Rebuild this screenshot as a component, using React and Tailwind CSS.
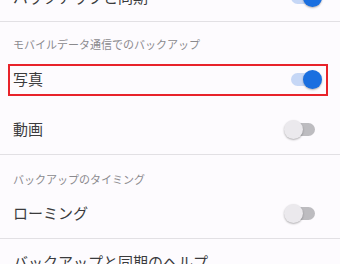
const font = { fontFamily: '"Noto Sans CJK JP", "Noto Sans", sans-serif' };

function Toggle({ on }) {
    return (
        <div className="relative w-[38px] h-[19px] shrink-0">
            <div className={`absolute left-[7px] top-[3px] w-[24px] h-[13px] rounded-full ${on ? 'bg-[#c6d7f6]' : 'bg-[#bdbcc0]'}`}></div>
            <div
                className={`absolute top-0 w-[19px] h-[19px] rounded-full shadow-[0_1px_2px_rgba(0,0,0,0.3)] ${on ? 'left-[19px] bg-[#1a6fe0]' : 'left-0 bg-[#ebe9ed]'}`}
            ></div>
        </div>
    );
}

function Row({ label, on, height, children }) {
    return (
        <div className={`relative flex items-center justify-between pl-[13px] pr-[18px] ${height}`}>
            <span className="text-[15px] text-[#3b3b3d]">{label}</span>
            {on !== undefined && <Toggle on={on} />}
            {children}
        </div>
    );
}

export default function App() {
    return (
        <div className="w-[340px] h-[264px] overflow-hidden bg-[#fdfbfe]" style={font}>
            <div className="-mt-[27px]">
                <Row label="バックアップと同期" on={true} height="h-[48px]" />
            </div>
            <div className="h-px bg-[#e2e0e4]"></div>

            {/* モバイルデータ通信 */}
            <div className="h-[32px] pl-[13px] pt-[14px] text-[11px] leading-[16px] text-[#8b8a8e]">
                モバイルデータ通信でのバックアップ
            </div>
            <Row label="写真" on={true} height="h-[50px]">
                <span className="absolute left-[8px] top-[10px] w-[320px] h-[32px] border-2 border-[#e8232a]"></span>
            </Row>
            <Row label="動画" on={false} height="h-[50px]" />
            <div className="h-px bg-[#e2e0e4]"></div>

            {/* タイミング */}
            <div className="h-[33px] pl-[13px] pt-[16px] text-[11px] leading-[16px] text-[#8b8a8e]">
                バックアップのタイミング
            </div>
            <Row label="ローミング" on={false} height="h-[50px]" />
            <div className="h-px bg-[#e2e0e4]"></div>

            <Row label="バックアップと同期のヘルプ" height="h-[46px]" />
        </div>
    );
}
